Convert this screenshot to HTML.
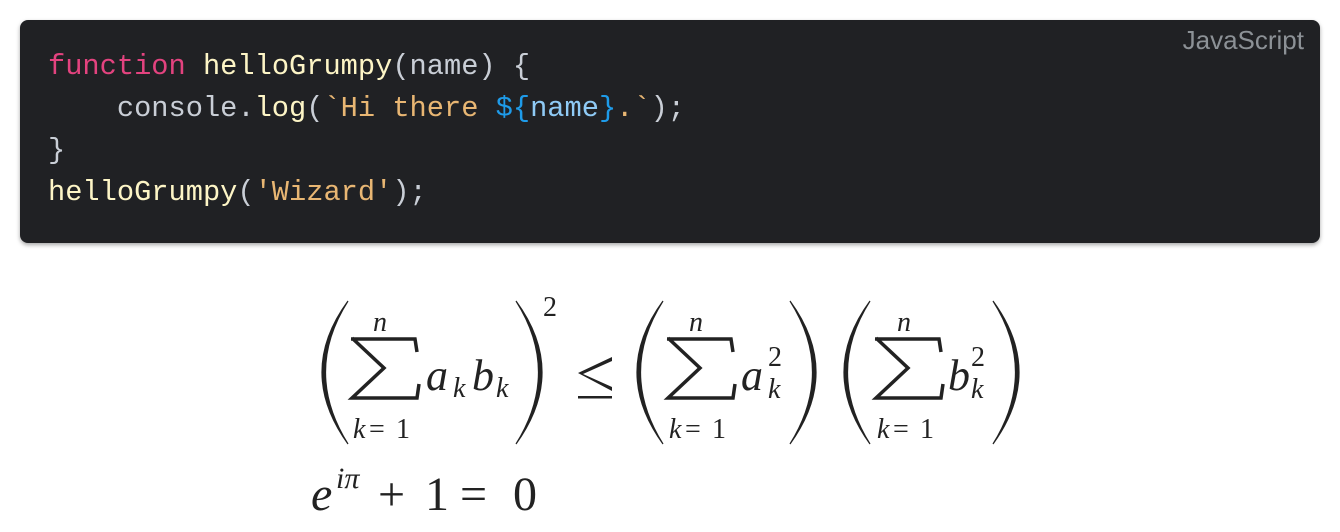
<!DOCTYPE html>
<html><head><meta charset="utf-8"><style>
html,body{margin:0;padding:0;background:#fff;width:1340px;height:532px;overflow:hidden;position:relative}
.box{position:absolute;left:20px;top:20px;width:1300px;height:223px;background:#202124;border-radius:8px;box-shadow:0 2px 4px rgba(0,0,0,.35)}
.lang{position:absolute;right:16px;top:5px;font:26px "Liberation Sans",sans-serif;color:#8c9196}
pre{position:absolute;left:28px;top:26px;margin:0;font:28.7px/42px "Liberation Mono",monospace;color:#c9ced6}
.k{color:#e3437f}.f{color:#fdf5c6}.s{color:#e8b673}.b{color:#1e9be9}.v{color:#8fcaf5}
</style></head><body>
<div class="box"><div class="lang">JavaScript</div>
<pre><span class="k">function</span> <span class="f">helloGrumpy</span>(name) {
    console.<span class="f">log</span>(<span class="s">`Hi there </span><span class="b">${</span><span class="v">name</span><span class="b">}</span><span class="s">.`</span>);
}
<span class="f">helloGrumpy</span>(<span class="s">'Wizard'</span>);</pre></div>
<svg width="1340" height="532" style="position:absolute;left:0;top:0" xmlns="http://www.w3.org/2000/svg">
<g fill="#222" stroke="#222" stroke-width="1.2">
<path d="M348,301 Q296,372 348,444 Q303,372 348,301Z"/>
<path d="M516,301 Q568,372 516,444 Q561,372 516,301Z"/>
<path d="M663,301 Q611,372 663,444 Q618,372 663,301Z"/>
<path d="M790,301 Q842,372 790,444 Q835,372 790,301Z"/>
<path d="M870,301 Q818,372 870,444 Q825,372 870,301Z"/>
<path d="M993,301 Q1045,372 993,444 Q1038,372 993,301Z"/>
</g>
<g fill="#222">
<path d="M578,373 L612,357 L612,361 L583,374 L612,387 L612,391Z"/>
<rect x="578" y="396" width="34" height="2.5"/>
</g>
<g fill="none" stroke="#222">
<path d="M351,339 L415,339 L417,352 M352,338 L384,368 L352,398 L417,398 L419,384" stroke-width="3.5"/>
<path d="M667,339 L731,339 L733,352 M668,338 L700,368 L668,398 L733,398 L735,384" stroke-width="3.5"/>
<path d="M875,339 L939,339 L941,352 M876,338 L908,368 L876,398 L941,398 L943,384" stroke-width="3.5"/>
</g>
<g font-family="Liberation Serif,serif" fill="#222">
<text x="373" y="331" font-size="28" font-style="italic">n</text>
<text x="353" y="438" font-size="28" font-style="italic">k</text><text x="369" y="438" font-size="28">=</text><text x="396" y="438" font-size="28">1</text>
<text x="426" y="390" font-size="44" font-style="italic">a</text>
<text x="453" y="397" font-size="28" font-style="italic">k</text>
<text x="472" y="390" font-size="44" font-style="italic">b</text>
<text x="496" y="397" font-size="28" font-style="italic">k</text>
<text x="543" y="316" font-size="28">2</text>
<text x="689" y="331" font-size="28" font-style="italic">n</text>
<text x="669" y="438" font-size="28" font-style="italic">k</text><text x="685" y="438" font-size="28">=</text><text x="712" y="438" font-size="28">1</text>
<text x="741" y="390" font-size="44" font-style="italic">a</text>
<text x="768" y="366" font-size="28">2</text>
<text x="768" y="398" font-size="28" font-style="italic">k</text>
<text x="897" y="331" font-size="28" font-style="italic">n</text>
<text x="877" y="438" font-size="28" font-style="italic">k</text><text x="893" y="438" font-size="28">=</text><text x="920" y="438" font-size="28">1</text>
<text x="948" y="390" font-size="44" font-style="italic">b</text>
<text x="971" y="366" font-size="28">2</text>
<text x="971" y="398" font-size="28" font-style="italic">k</text>
<text x="311" y="510" font-size="48" font-style="italic">e</text>
<text x="336" y="488" font-size="30" font-style="italic">iπ</text>
<text x="378" y="510" font-size="48">+</text>
<text x="425" y="510" font-size="48">1</text>
<text x="460" y="510" font-size="48">=</text>
<text x="513" y="510" font-size="48">0</text>
</g>
</svg>
</body></html>
